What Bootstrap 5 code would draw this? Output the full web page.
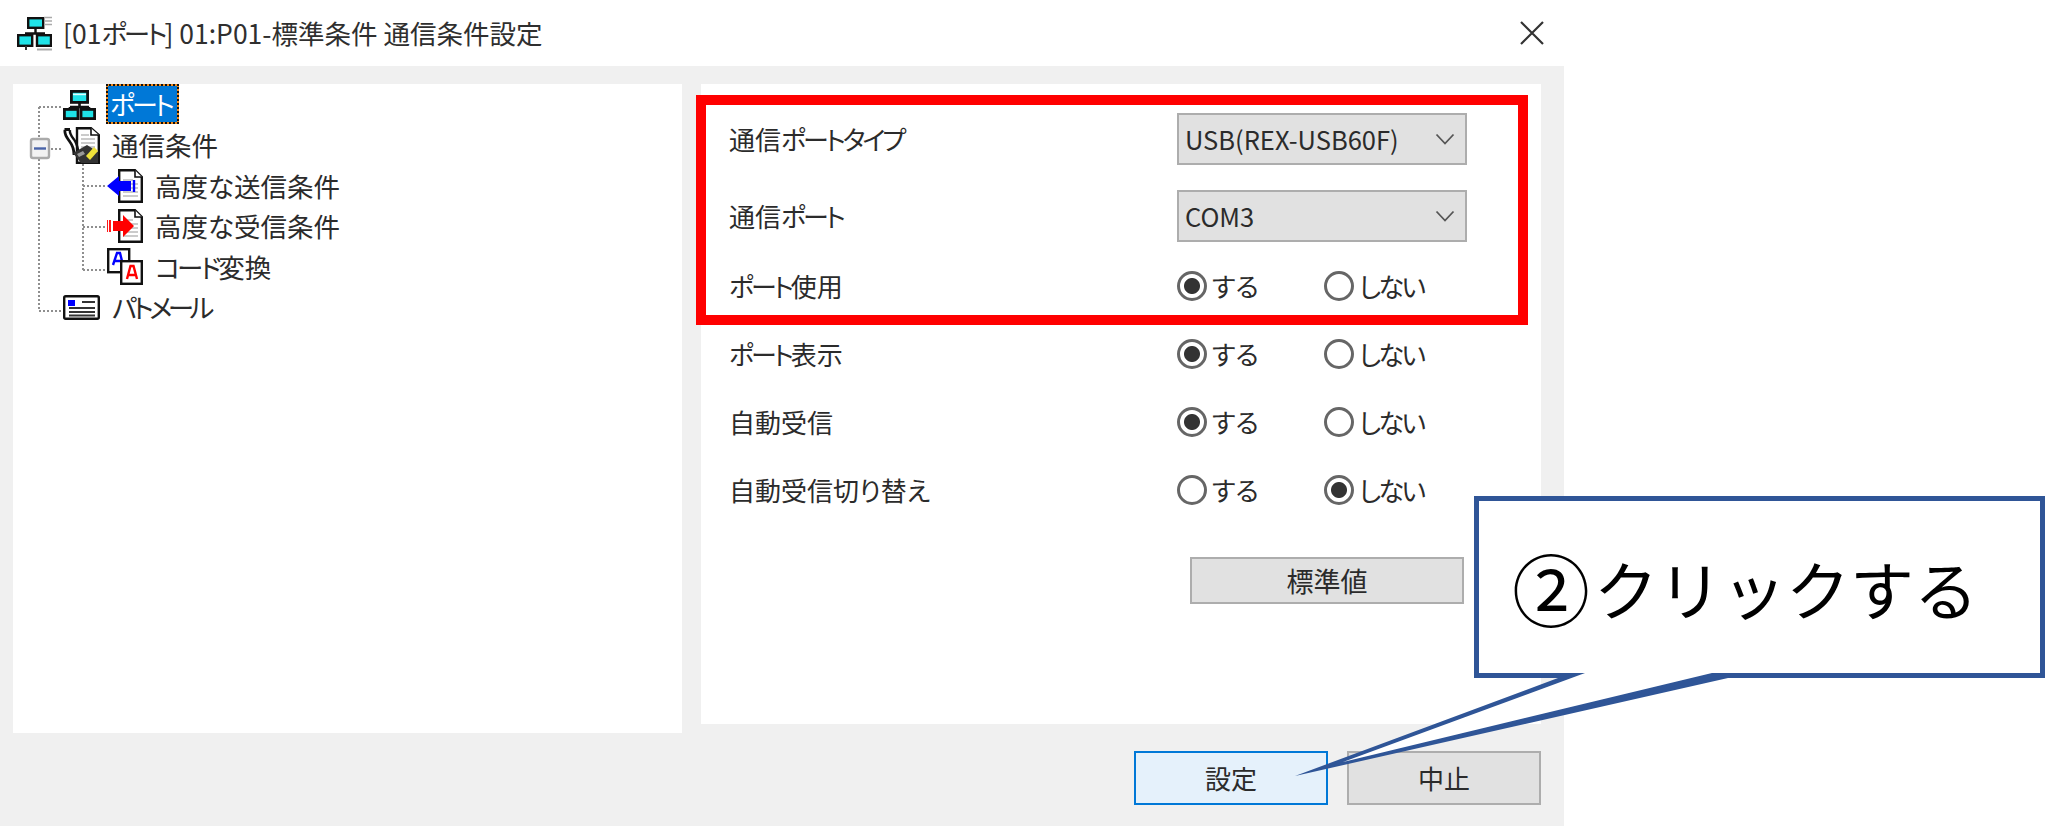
<!DOCTYPE html>
<html lang="ja">
<head>
<meta charset="utf-8">
<title>通信条件設定</title>
<link rel="stylesheet" href="https://cdn.jsdelivr.net/npm/bootstrap@5.3.0/dist/css/bootstrap.min.css">
<style>
html,body{margin:0;background:#fff;overflow:hidden}
body{width:2045px;height:826px;position:relative;font-family:"Noto Sans CJK JP","Liberation Sans",sans-serif;font-size:26px;color:#2b2b2b;font-feature-settings:"palt";line-height:1}
.kn{letter-spacing:-3px}
.kn-w{letter-spacing:-4.5px}
.hg{letter-spacing:-2.5px}
.dlg{width:1564px;height:826px;background:#f0f0f0}
.ttl{height:66px;background:#fff;padding-left:17px;padding-right:20px}
.ttl-ico{width:35px;height:35px;margin-right:11px}
.ttl-txt{font-size:26.5px;color:#2f2f2f}
.x-ico{width:24px;height:24px}
.main{padding:18px 22px 0 13px;gap:19px}
.pane-l{width:669px;height:649px;background:#fff;position:relative;padding-top:1px;font-size:26.5px}
.tree-lines{position:absolute;left:0;top:0;width:669px;height:649px;pointer-events:none}
.tr{height:40.4px;gap:12px}
.tr.lv1{padding-left:50px}
.tr.lv2{padding-left:94px}
.tr svg{flex:none}
.tr-sel{background-color:#f28a1a;background-image:linear-gradient(#0078d7,#0078d7);background-origin:padding-box;background-clip:border-box;background-size:100% 100%;background-repeat:no-repeat;color:#fff;padding:0 5px 0 2px;height:40px;line-height:36px;border:2px dotted #111;margin-left:-2px;margin-top:-2px;white-space:nowrap;font-size:26px}
.pane-r{width:840px;height:640px;background:#fff;padding:21px 0 0 28px;position:relative}
.fr{height:68px}
.fr-a{margin-bottom:9px}
.fr-b{margin-bottom:2px}
.fr-l{width:448px;flex:none;white-space:nowrap}
.sel{width:290px;height:52px;border:2px solid #adadad;border-radius:0;background-color:#e1e1e1;font-size:25.5px;color:#2b2b2b;padding:0 0 0 6px;line-height:48px;background-position:right 10px center;background-size:20px 12px;background-image:url("data:image/svg+xml,%3Csvg xmlns='http://www.w3.org/2000/svg' viewBox='0 0 20 12'%3E%3Cpath d='M1.5 1.5 10 10.5 18.5 1.5' fill='none' stroke='%23555' stroke-width='1.8'/%3E%3C/svg%3E");font-family:"Noto Sans CJK JP","Liberation Sans",sans-serif;font-feature-settings:"palt";box-shadow:none}
.opt{width:147px;gap:5px;margin:0}
.rb{appearance:none;-webkit-appearance:none;width:30px;height:30px;flex:none;margin:0;border:3px solid #666;border-radius:50%;background:#fff}
.rb:checked{background:radial-gradient(circle,#333 0 7.5px,#fff 8.5px)}
.std{margin-left:461px;margin-top:33px;width:274px;height:47px;border:2px solid #adadad;background:#e1e1e1;border-radius:0;font-size:27px;color:#2b2b2b;padding:0;line-height:1}
.foot{padding:18px 23px 0 0;gap:19px}
.bt{width:194px;height:54px;border:2px solid #adadad;background:#e1e1e1;border-radius:0;font-size:26px;color:#2b2b2b;padding:0;line-height:1}
.bt-p{background:#e5f1fb;border-color:#0078d7}
.red-box{position:absolute;left:-5px;top:11px;width:832px;height:230px;border:10px solid #f00;pointer-events:none}
.call-svg{position:absolute;left:0;top:0;width:2045px;height:826px;pointer-events:none}
.call-txt{position:absolute;left:1512px;top:496px;height:182px;font-size:64px;color:#000;white-space:nowrap;font-feature-settings:normal}
.call-num{font-size:78px;margin-right:4px}
</style>
</head>
<body>
<svg width="0" height="0" class="d-block" style="position:absolute">
  <symbol id="net" viewBox="0 0 33 30">
    <rect x="8.4" y="1.4" width="16.2" height="11" fill="#1fe3e8" stroke="#111" stroke-width="2.8"/>
    <path d="M10 4.4h13" stroke="#dff" stroke-width="1.6"/>
    <path d="M16.5 12v5M7 17h19M7 17v2M26 17v2" fill="none" stroke="#111" stroke-width="2.6"/>
    <rect x="1.4" y="19.4" width="13.6" height="9.2" fill="#1fe3e8" stroke="#111" stroke-width="2.8"/>
    <rect x="18" y="19.4" width="13.6" height="9.2" fill="#1fe3e8" stroke="#111" stroke-width="2.8"/>
  </symbol>
  <symbol id="doc" viewBox="0 0 25 34">
    <path d="M1.2 1.2H17L23.8 8V32.8H1.2Z" fill="#fff" stroke="#111" stroke-width="2.4"/>
    <path d="M17 1.2V8H23.8" fill="#fff" stroke="#111" stroke-width="1.6"/>
    <path d="M5 11h10M5 15h15M5 19h15M5 23h15M5 27h15" stroke="#bbb" stroke-width="1.6"/>
  </symbol>
</svg>

<div class="dlg d-flex flex-column">
  <div class="ttl d-flex align-items-center">
    <svg class="ttl-ico" viewBox="0 0 35 35">
      <rect x="11.2" y="2.2" width="15" height="9.6" fill="#1fe3e8" stroke="#111" stroke-width="2.4"/>
      <path d="M27 1.5h8M27 5h8M27 8.5h8" stroke="#aaa" stroke-width="1.5"/>
      <path d="M18.5 12v6M8 17.5h20" stroke="#111" stroke-width="2.4"/>
      <rect x="1.2" y="19.2" width="14" height="10.6" fill="#1fe3e8" stroke="#111" stroke-width="2.4"/>
      <rect x="20" y="19.2" width="14" height="10.6" fill="#1fe3e8" stroke="#111" stroke-width="2.4"/>
      <path d="M9 30v4" stroke="#333" stroke-width="2"/>
      <path d="M20 33.5h15" stroke="#aaa" stroke-width="2"/>
    </svg>
    <span class="ttl-txt">[01<span class="kn">ポート</span>] 01:P01-標準条件 通信条件設定</span>
    <svg class="x-ico ms-auto" viewBox="0 0 24 24"><path d="M1 1 23 23M23 1 1 23" stroke="#333" stroke-width="2.2"/></svg>
  </div>

  <div class="main d-flex">
    <div class="pane-l">
      <svg class="tree-lines" viewBox="0 0 669 649">
        <g fill="none" stroke="#8f8f8f" stroke-width="2" stroke-dasharray="2 2">
          <path d="M26 23V54M26 75V227M26 23H50M26 227H50M38 65H50M70 80V186M70 102H94M70 143H94M70 186H94"/>
        </g>
        <rect x="18" y="55" width="18" height="19" rx="2" fill="#f2f2f2" stroke="#aaa" stroke-width="2.4"/>
        <path d="M21 64.5h12" stroke="#4a64a8" stroke-width="2.4"/>
      </svg>
      <div class="tr lv1 d-flex align-items-center position-relative">
        <svg width="33" height="30"><use href="#net"/></svg>
        <span class="tr-sel kn">ポート</span>
      </div>
      <div class="tr lv1 d-flex align-items-center position-relative">
        <svg width="37" height="37" viewBox="0 0 37 37">
          <path d="M14 1.2H28L35.8 8V35.8H14Z" fill="#fff" stroke="#111" stroke-width="2.4"/>
          <path d="M28 1.2V8H35.8" fill="#fff" stroke="#111" stroke-width="1.6"/>
          <path d="M18 8h8M18 12h14M18 16h14M18 20h14" stroke="#bbb" stroke-width="1.6"/>
          <path d="M1.5 2.5H7M2 3C1 8 5 12 7 15C10 19 11 24 11 28" fill="none" stroke="#111" stroke-width="2.8"/>
          <path d="M7 3C6 7 10 11 12 14C14 18 15 21 15 24" fill="none" stroke="#111" stroke-width="2.4"/>
          <path d="M10 26 24 18 35 25V36H18Z" fill="#333"/>
          <path d="M14 27l6-3 2 3-6 3Z" fill="#999"/>
          <path d="M23 29 31 20 35 24 27 33Z" fill="#efe23a"/>
        </svg>
        <span>通信条件</span>
      </div>
      <div class="tr lv2 d-flex align-items-center position-relative">
        <svg width="36" height="34" viewBox="0 0 36 34">
          <svg x="11" y="0" width="25" height="34"><use href="#doc"/></svg>
          <path d="M0 17 12 7V12H24V22H12V27Z" fill="#00f"/>
          <path d="M27 11V23" stroke="#00f" stroke-width="2.4"/>
        </svg>
        <span>高度な送信条件</span>
      </div>
      <div class="tr lv2 d-flex align-items-center position-relative">
        <svg width="36" height="34" viewBox="0 0 36 34">
          <svg x="11" y="0" width="25" height="34"><use href="#doc"/></svg>
          <path d="M0 11V23M3 11V23" stroke="#f00" stroke-width="1.8"/>
          <path d="M6 12H16V6L27 17 16 28V22H6Z" fill="#f00"/>
        </svg>
        <span>高度な受信条件</span>
      </div>
      <div class="tr lv2 d-flex align-items-center position-relative">
        <svg width="36" height="37" viewBox="0 0 36 37">
          <rect x="1.2" y="1.2" width="21" height="23" fill="#fff" stroke="#111" stroke-width="2.4"/>
          <path d="M6 17 10 5h3l3 12M7 13h8" fill="none" stroke="#00f" stroke-width="2.4"/>
          <rect x="14.2" y="13.2" width="20.6" height="22.6" fill="#fff" stroke="#111" stroke-width="2.4"/>
          <path d="M20 31 23.5 18h3L30 31M21 27h8" fill="none" stroke="#f00" stroke-width="2.4"/>
        </svg>
        <span><span class="kn">コード</span>変換</span>
      </div>
      <div class="tr lv1 d-flex align-items-center position-relative">
        <svg width="37" height="25" viewBox="0 0 37 25">
          <rect x="1.2" y="1.2" width="34.6" height="22.6" rx="1.5" fill="#fff" stroke="#111" stroke-width="2.4"/>
          <rect x="5" y="5" width="7" height="6" fill="#00f"/>
          <path d="M19 7h13M6 13h26M6 17h26M6 20.5h26" stroke="#333" stroke-width="1.8"/>
        </svg>
        <span class="kn-w">パトメール</span>
      </div>
    </div>

    <div class="pane-r">
      <div class="fr fr-a d-flex align-items-center"><span class="fr-l">通信<span class="kn">ポートタイプ</span></span>
        <select class="form-select sel"><option>USB(REX-USB60F)</option></select></div>
      <div class="fr fr-b d-flex align-items-center"><span class="fr-l">通信<span class="kn">ポート</span></span>
        <select class="form-select sel"><option>COM3</option></select></div>
      <div class="fr d-flex align-items-center"><span class="fr-l"><span class="kn">ポート</span>使用</span>
        <label class="opt d-flex align-items-center"><input class="rb" type="radio" name="a" checked>する</label>
        <label class="opt d-flex align-items-center"><input class="rb" type="radio" name="a"><span class="hg">しない</span></label></div>
      <div class="fr d-flex align-items-center"><span class="fr-l"><span class="kn">ポート</span>表示</span>
        <label class="opt d-flex align-items-center"><input class="rb" type="radio" name="b" checked>する</label>
        <label class="opt d-flex align-items-center"><input class="rb" type="radio" name="b"><span class="hg">しない</span></label></div>
      <div class="fr d-flex align-items-center"><span class="fr-l">自動受信</span>
        <label class="opt d-flex align-items-center"><input class="rb" type="radio" name="c" checked>する</label>
        <label class="opt d-flex align-items-center"><input class="rb" type="radio" name="c"><span class="hg">しない</span></label></div>
      <div class="fr d-flex align-items-center"><span class="fr-l">自動受信切り替え</span>
        <label class="opt d-flex align-items-center"><input class="rb" type="radio" name="d">する</label>
        <label class="opt d-flex align-items-center"><input class="rb" type="radio" name="d" checked><span class="hg">しない</span></label></div>
      <button class="btn std d-block" type="button">標準値</button>
      <div class="red-box"></div>
    </div>
  </div>

  <div class="foot d-flex justify-content-end">
    <button class="btn bt bt-p" type="button">設定</button>
    <button class="btn bt" type="button">中止</button>
  </div>
</div>

<svg class="call-svg" viewBox="0 0 2045 826">
  <path d="M1474 496H2045V678H1728L1295 776 1558 678H1474Z" fill="#2f5597"/>
  <path d="M1479 501H2040V673H1712L1343 762 1585 673H1479Z" fill="#fff"/>
</svg>
<div class="call-txt d-flex align-items-center"><span class="call-num">②</span>クリックする</div>
</body>
</html>
